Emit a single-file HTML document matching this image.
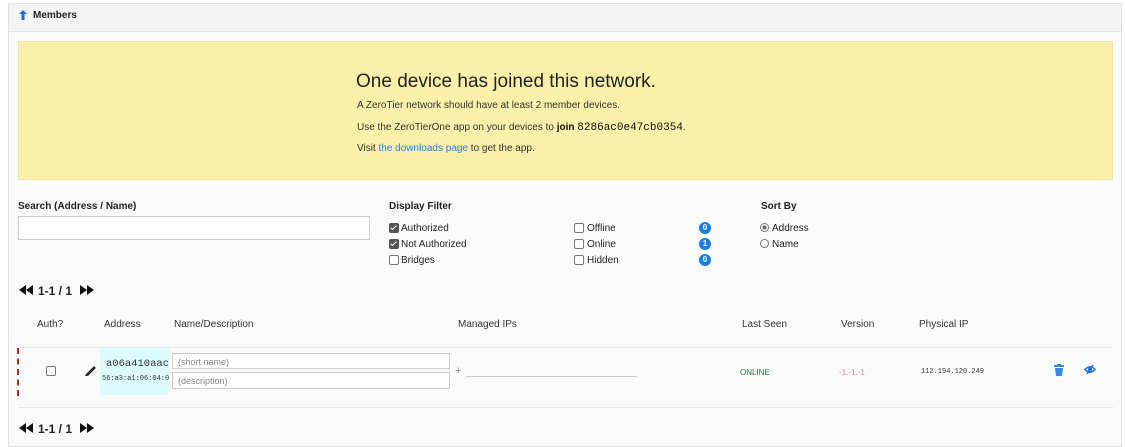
<!DOCTYPE html><html><head><style>
body{margin:0;width:1125px;height:445px;overflow:hidden;background:#fff;font-family:"Liberation Sans",sans-serif;color:#222;position:relative}
.a{position:absolute;white-space:nowrap}
.s{font-size:10px}
.cb{position:absolute;width:8px;height:8px;border:1px solid #777;border-radius:2px;background:#fff}
.cb.on{background:#555;border-color:#555}
.cb.on::after{content:"";position:absolute;left:2px;top:0px;width:2px;height:5px;border:solid #fff;border-width:0 1.5px 1.5px 0;transform:rotate(45deg)}
.badge{position:absolute;width:12px;height:12px;border-radius:6px;background:#1a7ee6;color:#fff;font-size:8px;font-weight:bold;text-align:center;line-height:12px}
.mono{font-family:"Liberation Mono",monospace}
</style></head><body>
<div class="a" style="left:8px;top:3px;width:1112px;height:442px;border:1px solid #e2e2e2;background:#fafafa"></div>
<div class="a" style="left:9px;top:4px;width:1112px;height:27px;background:#f4f4f4;border-bottom:1px solid #e0e0e0"></div>
<svg class="a" style="left:19px;top:10px" width="8" height="10"><path d="M4 0L8 4H5.5V10H2.5V4H0Z" fill="#1a6fe0"/></svg>
<div class="a" style="left:33px;top:10px;font-size:10px;font-weight:bold">Members</div>
<div class="a" style="left:18px;top:41px;width:1095px;height:139px;background:#fbf0aa;border:1px solid #f0e3a0;box-sizing:border-box"></div>
<div class="a" style="left:356px;top:71px;font-size:19px">One device has joined this network.</div>
<div class="a s" style="left:357px;top:100px;color:#333">A ZeroTier network should have at least 2 member devices.</div>
<div class="a s" style="left:357px;top:122px;color:#333">Use the ZeroTierOne app on your devices to <b style="color:#111">join</b> <span class="mono" style="font-size:11px;color:#111">8286ac0e47cb0354</span>.</div>
<div class="a s" style="left:357px;top:143px;color:#333">Visit <span style="color:#2a7ae2">the downloads page</span> to get the app.</div>
<div class="a s" style="left:18px;top:201px;font-weight:bold">Search (Address / Name)</div>
<div class="a" style="left:18px;top:216px;width:352px;height:24px;border:1px solid #ccc;background:#fff;box-sizing:border-box"></div>
<div class="a s" style="left:389px;top:201px;font-weight:bold">Display Filter</div>
<div class="cb on" style="left:389px;top:223px"></div><div class="a s" style="left:401px;top:223px">Authorized</div>
<div class="cb on" style="left:389px;top:239px"></div><div class="a s" style="left:401px;top:239px">Not Authorized</div>
<div class="cb" style="left:389px;top:255px"></div><div class="a s" style="left:401px;top:255px">Bridges</div>
<div class="cb" style="left:574px;top:223px"></div><div class="a s" style="left:587px;top:223px">Offline</div>
<div class="cb" style="left:574px;top:239px"></div><div class="a s" style="left:587px;top:239px">Online</div>
<div class="cb" style="left:574px;top:255px"></div><div class="a s" style="left:587px;top:255px">Hidden</div>
<div class="badge" style="left:699px;top:222px">0</div>
<div class="badge" style="left:699px;top:238px">1</div>
<div class="badge" style="left:699px;top:254px">0</div>
<div class="a s" style="left:761px;top:201px;font-weight:bold">Sort By</div>
<div class="a" style="left:760px;top:223px;width:7px;height:7px;border:1px solid #777;border-radius:50%;background:radial-gradient(#666 40%,#fff 45%)"></div><div class="a s" style="left:772px;top:223px">Address</div>
<div class="a" style="left:760px;top:239px;width:7px;height:7px;border:1px solid #777;border-radius:50%;background:#fff"></div><div class="a s" style="left:772px;top:239px">Name</div>
<svg class="a" style="left:19px;top:285px" width="14" height="10"><path d="M7 0V10L0 5Z M14 0V10L7 5Z" fill="#111"/></svg>
<div class="a" style="left:38px;top:284px;font-size:12px;font-weight:bold">1-1 / 1</div>
<svg class="a" style="left:80px;top:285px" width="14" height="10"><path d="M0 0V10L7 5Z M7 0V10L14 5Z" fill="#111"/></svg>
<div class="a s" style="left:37px;top:319px;color:#333">Auth?</div>
<div class="a s" style="left:104px;top:319px;color:#333">Address</div>
<div class="a s" style="left:174px;top:319px;color:#333">Name/Description</div>
<div class="a s" style="left:458px;top:319px;color:#333">Managed IPs</div>
<div class="a s" style="left:742px;top:319px;color:#333">Last Seen</div>
<div class="a s" style="left:841px;top:319px;color:#333">Version</div>
<div class="a s" style="left:919px;top:319px;color:#333">Physical IP</div>
<div class="a" style="left:18px;top:347px;width:1095px;height:1px;background:#e4e4e4"></div>
<div class="a" style="left:17px;top:348px;height:48px;border-left:2px dashed #b0262a"></div>
<div class="cb" style="left:46px;top:366px"></div>
<svg class="a" style="left:85px;top:364px" width="12" height="12"><path d="M2 10L9 3L10 4L3 11L1 11.5Z" fill="none" stroke="#222" stroke-width="1.3"/></svg>
<div class="a" style="left:100px;top:348px;width:69px;height:47px;background:#dcfbfd"></div>
<div class="a mono" style="left:106px;top:358px;font-size:10.5px;color:#333">a06a410aac</div>
<div class="a mono" style="left:102px;top:375px;font-size:7px;color:#333;width:67px;overflow:hidden">56:a3:a1:06:04:0c</div>
<div class="a" style="left:172px;top:353px;width:278px;height:16px;border:1px solid #ccc;background:#fff;font-size:9px;color:#888;padding-left:5px;line-height:16px;box-sizing:border-box">(short name)</div>
<div class="a" style="left:172px;top:372px;width:278px;height:17px;border:1px solid #ccc;background:#fff;font-size:9px;color:#888;padding-left:5px;line-height:17px;box-sizing:border-box">(description)</div>
<div class="a" style="left:455px;top:365px;font-size:11px;color:#888">+</div>
<div class="a" style="left:466px;top:376px;width:171px;height:1px;background:#ccc"></div>
<div class="a" style="left:740px;top:368px;font-size:8px;color:#2f6d3a">ONLINE</div>
<div class="a" style="left:839px;top:368px;font-size:8px;color:#e8828a">-1.-1.-1</div>
<div class="a mono" style="left:921px;top:368px;font-size:7px;color:#333">112.194.120.249</div>
<svg class="a" style="left:1054px;top:364px" width="10" height="12"><rect x="0" y="1" width="10" height="2" fill="#3a86f0"/><rect x="3" y="0" width="4" height="2" fill="#3a86f0"/><path d="M1 4H9L8 12H2Z" fill="#3a86f0"/></svg>
<svg class="a" style="left:1084px;top:364px" width="12" height="11"><path d="M1 5.5Q6 0 11 5.5Q6 11 1 5.5Z" fill="none" stroke="#1a6fe0" stroke-width="1.6"/><circle cx="6" cy="5.5" r="2" fill="#1a6fe0"/><path d="M3 10L9 1" stroke="#1a6fe0" stroke-width="1.5"/></svg>
<div class="a" style="left:18px;top:407px;width:1095px;height:1px;background:#e4e4e4"></div>
<svg class="a" style="left:19px;top:423px" width="14" height="10"><path d="M7 0V10L0 5Z M14 0V10L7 5Z" fill="#111"/></svg>
<div class="a" style="left:38px;top:422px;font-size:12px;font-weight:bold">1-1 / 1</div>
<svg class="a" style="left:80px;top:423px" width="14" height="10"><path d="M0 0V10L7 5Z M7 0V10L14 5Z" fill="#111"/></svg>
</body></html>
